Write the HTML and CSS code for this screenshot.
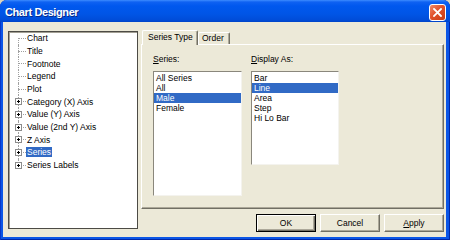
FILE: index.html
```html
<!DOCTYPE html>
<html>
<head>
	<meta charset="UTF-8">
	<title>Chart Designer</title>
	<link rel="stylesheet" href="styles.css">
</head>
<body>
 <div class="window">
	 <div class="titlebar">
		 <span class="title">Chart Designer</span>
		 <span class="close">
			 <svg width="9" height="9" viewBox="0 0 9 9">
				 <path d="M1 1 L8 8 M8 1 L1 8" stroke="#fff" stroke-width="1.8" stroke-linecap="square"/>
			 </svg>
		 </span>
	 </div>

	 <div class="client">
		 <div class="tree-box">
			 <ul class="tree">
				 <li class="node first"><span class="branch"></span><span class="label">Chart</span></li>
				 <li class="node"><span class="branch"></span><span class="label">Title</span></li>
				 <li class="node"><span class="branch"></span><span class="label">Footnote</span></li>
				 <li class="node"><span class="branch"></span><span class="label">Legend</span></li>
				 <li class="node"><span class="branch"></span><span class="label">Plot</span></li>
				 <li class="node"><span class="branch"><span class="plus"></span></span><span class="label">Category (X) Axis</span></li>
				 <li class="node"><span class="branch"><span class="plus"></span></span><span class="label">Value (Y) Axis</span></li>
				 <li class="node"><span class="branch"><span class="plus"></span></span><span class="label">Value (2nd Y) Axis</span></li>
				 <li class="node"><span class="branch"><span class="plus"></span></span><span class="label">Z Axis</span></li>
				 <li class="node"><span class="branch"><span class="plus"></span></span><span class="label selected">Series</span></li>
				 <li class="node last"><span class="branch"><span class="plus"></span></span><span class="label">Series Labels</span></li>
			 </ul>
		 </div>

		 <div class="main">
			 <div class="tabs">
				 <div class="tab active">Series Type</div>
				 <div class="tab">Order</div>
			 </div>

			 <div class="panel">
				 <div class="field">
					 <div class="caption"><u>S</u>eries:</div>
					 <ul class="listbox series">
						 <li>All Series</li>
						 <li>All</li>
						 <li class="selected">Male</li>
						 <li>Female</li>
					 </ul>
				 </div>
				 <div class="field">
					 <div class="caption"><u>D</u>isplay As:</div>
					 <ul class="listbox display">
						 <li>Bar</li>
						 <li class="selected">Line</li>
						 <li>Area</li>
						 <li>Step</li>
						 <li>Hi Lo Bar</li>
					 </ul>
				 </div>
			 </div>

			 <div class="buttons">
				 <div class="btn default">OK</div>
				 <div class="btn">Cancel</div>
				 <div class="btn"><u>A</u>pply</div>
			 </div>
		 </div>
	 </div>
 </div>
</body>
</html>
```

FILE: styles.css
```css
* {
	margin: 0;
	padding: 0;
	box-sizing: border-box;
}
body {
	width: 450px;
	height: 240px;
	overflow: hidden;
	background: #d8d4c0;
	font: 8.5px "Liberation Sans", Arial, sans-serif;
	color: #000;
}
ul {
	list-style: none;
}

/* window frame */
.window {
	width: 450px;
	height: 240px;
	display: flex;
	flex-direction: column;
	padding-bottom: 3px;
	background: #0b56e6;
	border-radius: 7px 7px 0 0;
	box-shadow: inset 1px 0 #0838c8, inset -1px 0 #0028a8, inset 0 -1px #0028a8;
}
.titlebar {
	height: 22px;
	display: flex;
	justify-content: space-between;
	align-items: flex-start;
	padding: 4px 4px 0 5px;
	border-radius: 7px 7px 0 0;
	background: linear-gradient(to bottom, #3d8cff 0, #0f62f2 2px, #0058ee 6px, #0055e6 14px, #004cd8 20px, #0044c8 22px);
}
.title {
	color: #fff;
	font: bold 11px "Liberation Sans", Arial, sans-serif;
	letter-spacing: -0.4px;
	line-height: 17px;
	text-shadow: 1px 1px #0a2a88;
}
.close {
	width: 17px;
	height: 17px;
	display: flex;
	align-items: center;
	justify-content: center;
	border: 1px solid #fff;
	border-radius: 3px;
	background: linear-gradient(135deg, #f08a6a 0, #e0522c 45%, #c83c14 100%);
}

.client {
	flex: 1;
	display: flex;
	gap: 3px;
	margin: 0 4px 0 3px;
	padding: 8px 2px 5px 5px;
	background: #ece9d8;
}

/* tree */
.tree-box {
	width: 130px;
	height: 198px;
	margin-top: 1px;
	background: #fff;
	border: 1px solid #4c4b45;
	box-shadow: inset 1px 1px #a29f93;
}
.node {
	display: flex;
	height: 12.67px;
	align-items: center;
}
.branch {
	position: relative;
	width: 16px;
	align-self: stretch;
	margin-left: 1px;
}
.branch::before {
	content: "";
	position: absolute;
	left: 8px;
	top: 0;
	bottom: 0;
	border-left: 1px dotted #a0a0a0;
}
.branch::after {
	content: "";
	position: absolute;
	left: 8px;
	top: 6px;
	width: 8px;
	border-top: 1px dotted #a0a0a0;
}
.first .branch::before {
	top: 6px;
}
.last .branch::before {
	bottom: 6px;
}
.plus {
	position: absolute;
	left: 5px;
	top: 3px;
	width: 7px;
	height: 7px;
	border: 1px solid #8c8c8c;
	background: #fff;
	z-index: 1;
}
.plus::before {
	content: "";
	position: absolute;
	left: 1px;
	top: 2px;
	width: 3px;
	height: 1px;
	background: #000;
}
.plus::after {
	content: "";
	position: absolute;
	left: 2px;
	top: 1px;
	width: 1px;
	height: 3px;
	background: #000;
}
.label {
	line-height: 10px;
	padding: 0 1px;
	white-space: nowrap;
}
.label.selected {
	background: #316ac5;
	color: #fff;
}

/* right side */
.main {
	width: 303px;
	display: flex;
	flex-direction: column;
}
.tabs {
	height: 14px;
	display: flex;
	align-items: flex-end;
	padding-left: 1px;
}
.tab {
	width: 32px;
	height: 12px;
	padding-left: 3px;
	line-height: 11px;
	border: 1px solid;
	border-bottom: none;
	border-color: #fff #716f64 #fff #fff;
	border-radius: 2px 2px 0 0;
	box-shadow: inset -1px 0 #aca899;
	background: #ece9d8;
	white-space: nowrap;
}
.tab.active {
	width: 56px;
	height: 15px;
	margin-bottom: -1px;
	padding-left: 5px;
	line-height: 12px;
	position: relative;
	z-index: 1;
}
.panel {
	height: 165px;
	display: flex;
	gap: 9px;
	padding: 9px 0 0 11px;
	border: 1px solid;
	border-color: #fff #716f64 #716f64 #fff;
	box-shadow: inset -1px -1px #aca899;
}
.caption {
	line-height: 10px;
	margin-bottom: 7px;
}
.listbox {
	background: #fff;
	border: 1px solid;
	border-color: #8a877c #f4f3ee #f4f3ee #8a877c;
	padding-top: 1px;
}
.listbox li {
	height: 10px;
	line-height: 10px;
	padding-left: 2px;
	white-space: nowrap;
}
.listbox li.selected {
	background: #316ac5;
	color: #fff;
}
.series {
	width: 89px;
	height: 125px;
}
.display {
	width: 88px;
	height: 94px;
}

.buttons {
	display: flex;
	justify-content: flex-end;
	gap: 4px;
	margin-top: 5px;
}
.btn {
	width: 60px;
	height: 18px;
	line-height: 16px;
	text-align: center;
	border: 1px solid;
	border-color: #fff #716f64 #716f64 #fff;
	box-shadow: inset -1px -1px #aca899;
	background: #ece9d8;
}
.btn.default {
	border-color: #000;
	box-shadow: inset 1px 1px #fff, inset -1px -1px #716f64, inset -2px -2px #aca899;
}
```
